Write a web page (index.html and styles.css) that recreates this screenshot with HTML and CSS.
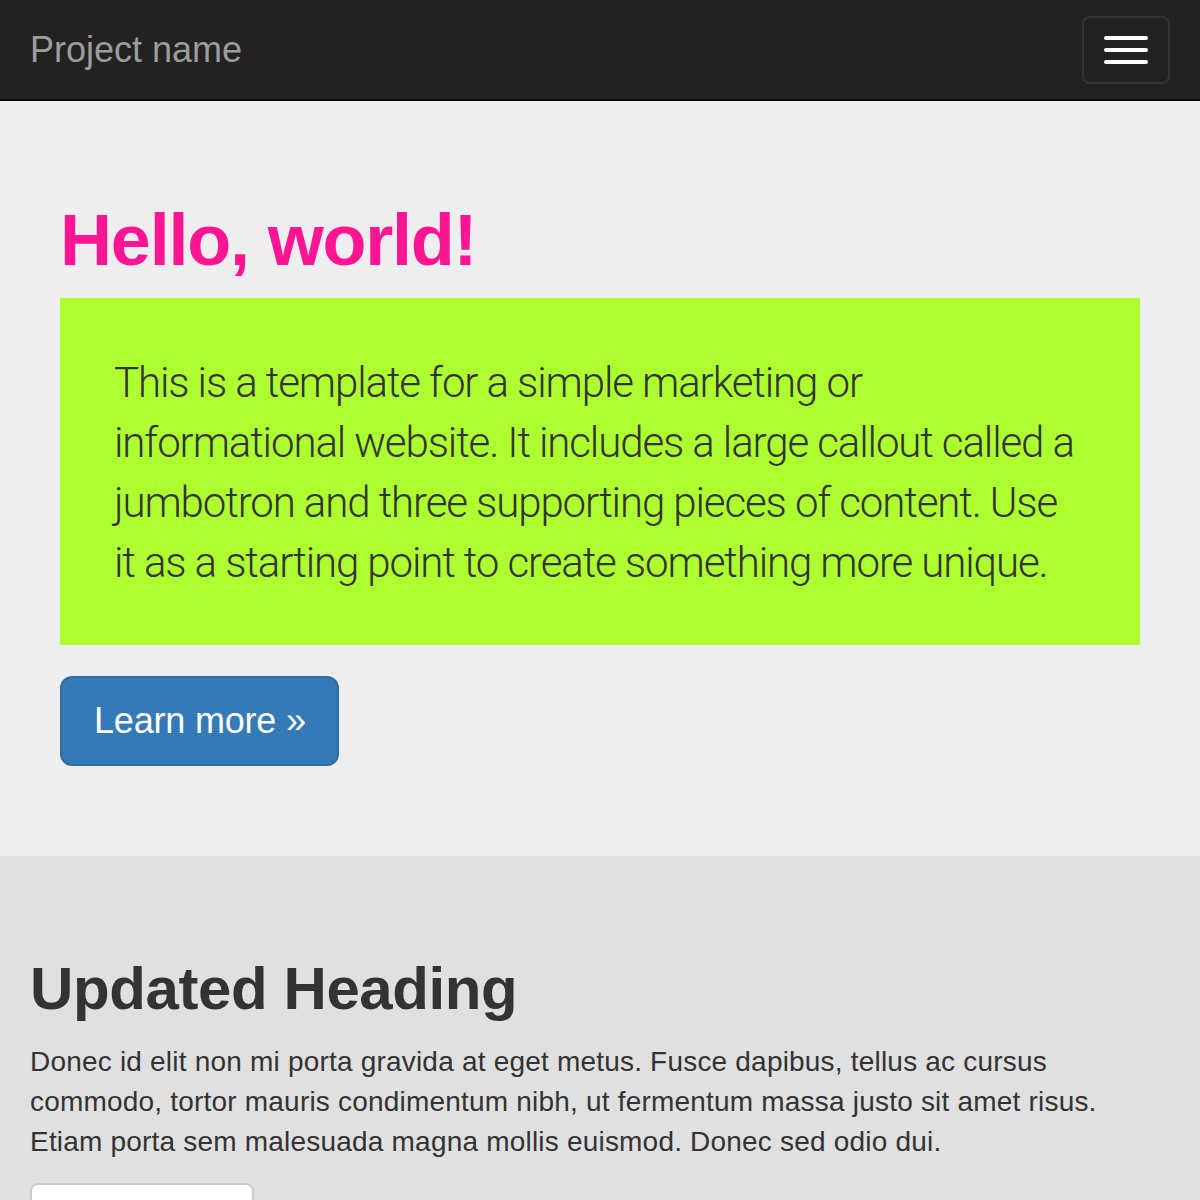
FILE: index.html
```html
<!DOCTYPE html>
<html lang="en">
<head>
<meta charset="utf-8">
<title>Jumbotron</title>
<link rel="stylesheet" href="styles.css">
</head>
<body>
<nav class="navbar">
  <a class="brand" href="#">Project name</a>
  <button class="toggle" type="button" aria-label="Toggle navigation">
    <span class="bar"></span>
    <span class="bar"></span>
    <span class="bar"></span>
  </button>
</nav>
<section class="jumbotron">
  <div class="jumbo-inner">
    <h1 class="hero-title">Hello, world!</h1>
    <p class="lead">This is a template for a simple marketing or informational website. It includes a large callout called a jumbotron and three supporting pieces of content. Use it as a starting point to create something more unique.</p>
    <p class="cta"><a class="btn btn-primary" href="#">Learn more &raquo;</a></p>
  </div>
</section>
<section class="content">
  <h2 class="section-title">Updated Heading</h2>
  <p class="body-text">Donec id elit non mi porta gravida at eget metus. Fusce dapibus, tellus ac cursus commodo, tortor mauris condimentum nibh, ut fermentum massa justo sit amet risus. Etiam porta sem malesuada magna mollis euismod. Donec sed odio dui.</p>
  <p class="cta2"><a class="btn btn-default" href="#">View details &raquo;</a></p>
</section>
</body>
</html>
```
FILE: styles.css
```css
html, body {
  margin: 0;
  padding: 0;
}
body {
  font-family: "Helvetica Neue", Helvetica, "Liberation Sans", Arial, sans-serif;
  color: #333;
  background: #e0e0e0;
  font-size: 28px;
  line-height: 40px;
}
.navbar {
  height: 101px;
  box-sizing: border-box;
  background: #222;
  border-bottom: 2px solid #080808;
  display: flex;
  justify-content: space-between;
  align-items: flex-start;
  padding: 0 30px;
}
.brand {
  display: block;
  padding: 30px 0;
  font-size: 36px;
  line-height: 40px;
  color: #9d9d9d;
  text-decoration: none;
}
.toggle {
  margin-top: 16px;
  width: 88px;
  height: 68px;
  box-sizing: border-box;
  padding: 18px 20px;
  background: transparent;
  border: 2px solid #333;
  border-radius: 8px;
  display: flex;
  flex-direction: column;
  gap: 8px;
  align-items: stretch;
}
.bar {
  display: block;
  width: 44px;
  height: 4px;
  background: #fff;
  border-radius: 2px;
}
.jumbotron {
  background: #eee;
  padding: 60px 60px 60px;
}
.hero-title {
  margin: 40px 0 18px;
  font-size: 72px;
  line-height: 79px;
  font-weight: 700;
  letter-spacing: -1.2px;
  color: #ff1493;
}
.lead {
  margin: 0;
  background: #adff2f;
  padding: 55px 62px 52px 54px;
  font-family: "Roboto", "Liberation Sans", sans-serif;
  font-weight: 300;
  font-size: 42px;
  line-height: 60px;
  letter-spacing: -1.1px;
  color: #333;
}
.cta {
  margin: 31px 0 30px;
  line-height: 0;
}
.btn {
  display: inline-block;
  box-sizing: border-box;
  text-decoration: none;
  border: 2px solid transparent;
  border-radius: 12px;
  font-size: 36px;
  line-height: 48px;
  padding: 19px 32px 19px 32px;
}
.btn-primary {
  background: #337ab7;
  border-color: #2e6da4;
  color: #fff;
  padding-right: 31px;
  letter-spacing: -0.2px;
}
.content {
  padding: 60px 30px 40px;
}
.section-title {
  margin: 40px 0 20px;
  font-size: 60px;
  line-height: 66px;
  font-weight: 700;
  letter-spacing: -0.4px;
  color: #333;
}
.body-text {
  margin: 0 0 21px;
  max-width: 1110px;
  letter-spacing: 0.2px;
}
.cta2 {
  margin: 0;
}
.btn-default {
  background: #fff;
  border-color: #ccc;
  color: #333;
  border-radius: 8px;
  font-size: 28px;
  line-height: 40px;
  padding: 12px 24px;
}
```
